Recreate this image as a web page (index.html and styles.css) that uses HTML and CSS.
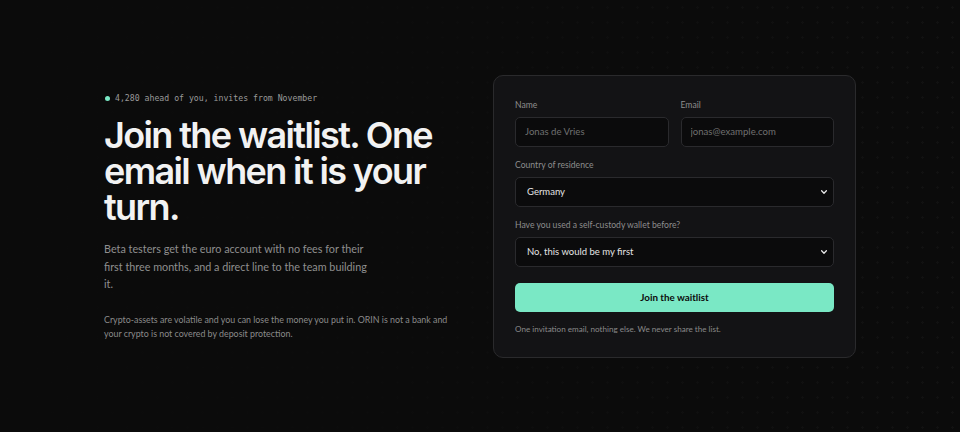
FILE: index.html
```html
<!DOCTYPE html>
<html lang="en">
<head>
<meta charset="utf-8">
<title>Join the waitlist</title>
<link rel="stylesheet" href="styles.css">
</head>
<body>
<main class="page">
  <div class="wrap">
    <section class="intro">
      <p class="eyebrow"><span class="dot"></span>4,280 ahead of you, invites from November</p>
      <h1 class="title">Join the waitlist. One email when it is your turn.</h1>
      <p class="lead">Beta testers get the euro account with no fees for their first three months, and a direct line to the team building it.</p>
      <p class="note">Crypto-assets are volatile and you can lose the money you put in. ORIN is not a bank and your crypto is not covered by deposit protection.</p>
    </section>
    <form class="card">
      <div class="row">
        <label class="field">
          <span class="label">Name</span>
          <input class="input" type="text" placeholder="Jonas de Vries">
        </label>
        <label class="field">
          <span class="label">Email</span>
          <input class="input" type="email" placeholder="jonas@example.com">
        </label>
      </div>
      <label class="field">
        <span class="label">Country of residence</span>
        <span class="select-wrap">
          <select class="input select">
            <option>Germany</option>
          </select>
          <svg class="chev" viewBox="0 0 10 10" width="8" height="8"><path d="M2 3.5 L5 6.5 L8 3.5" fill="none" stroke="#e8e8e8" stroke-width="1.6" stroke-linecap="round" stroke-linejoin="round"/></svg>
        </span>
      </label>
      <label class="field">
        <span class="label">Have you used a self-custody wallet before?</span>
        <span class="select-wrap">
          <select class="input select">
            <option>No, this would be my first</option>
          </select>
          <svg class="chev" viewBox="0 0 10 10" width="8" height="8"><path d="M2 3.5 L5 6.5 L8 3.5" fill="none" stroke="#e8e8e8" stroke-width="1.6" stroke-linecap="round" stroke-linejoin="round"/></svg>
        </span>
      </label>
      <button class="btn" type="button">Join the waitlist</button>
      <p class="foot">One invitation email, nothing else. We never share the list.</p>
    </form>
  </div>
</main>
</body>
</html>
```

FILE: styles.css
```css
* { box-sizing: border-box; }
html, body { margin: 0; padding: 0; }
body {
  background-color: #0b0b0b;
  background-image: radial-gradient(circle, rgba(255,255,255,0.05) 1px, transparent 1.2px);
  background-size: 15px 15px;
  font-family: Lato, "Noto Sans", "Liberation Sans", sans-serif;
  color: #e8e8e8;
  width: 960px;
  height: 432px;
  overflow: hidden;
}
.page {
  height: 432px;
  display: flex;
  align-items: center;
  background: linear-gradient(90deg, #0b0b0b 0%, rgba(11,11,11,0.9) 40%, rgba(11,11,11,0.4) 100%);
}
.wrap {
  width: 752px;
  margin: 0 auto;
  display: grid;
  grid-template-columns: 1fr 363px;
  column-gap: 26px;
  align-items: center;
}
.intro { padding-top: 2px; }
.eyebrow {
  margin: 0 0 13px;
  font-family: "DejaVu Sans Mono", "Liberation Mono", monospace;
  font-size: 8.2px;
  line-height: 11px;
  color: #9a9a9a;
  display: flex;
  align-items: center;
  gap: 5px;
}
.dot {
  width: 5px; height: 5px; border-radius: 50%;
  background: #7ae8c5;
  margin-left: 1px;
}
.title {
  margin: 0 0 15px;
  font-family: Inter, "Noto Sans", sans-serif;
  font-weight: 600;
  font-size: 36px;
  line-height: 36px;
  letter-spacing: -0.045em;
  color: #f2f2f2;
}
.lead {
  margin: 0 0 20px;
  max-width: 270px;
  font-size: 10.8px;
  line-height: 17.5px;
  color: #8f8f8f;
}
.note {
  margin: 0;
  max-width: 350px;
  font-size: 8.85px;
  line-height: 14px;
  color: #8a8a8a;
}
.card {
  background: #131315;
  border: 1px solid #2a2a2c;
  border-radius: 10px;
  padding: 24px 21px 22px;
  display: flex;
  flex-direction: column;
  gap: 13px;
}
.row {
  display: grid;
  grid-template-columns: 1fr 1fr;
  gap: 12px;
}
.field {
  display: flex;
  flex-direction: column;
  gap: 6px;
}
.label {
  font-size: 8.6px;
  line-height: 11px;
  color: #8d8d8d;
}
.input {
  width: 100%;
  height: 30px;
  background: #0b0b0c;
  border: 1px solid #2a2a2d;
  border-radius: 5px;
  padding: 0 9px;
  font-family: Lato, "Noto Sans", sans-serif;
  font-size: 9.6px;
  color: #e6e6e6;
  outline: none;
}
.input::placeholder { color: #707070; }
.select-wrap { position: relative; display: block; }
.select {
  appearance: none;
  -webkit-appearance: none;
  padding-left: 11px;
  font-size: 9.5px;
  color: #e4e4e4;
}
.chev {
  position: absolute;
  right: 6px;
  top: 11px;
  pointer-events: none;
}
.btn {
  margin-top: 3px;
  height: 29px;
  border: 0;
  border-radius: 5px;
  background: #7ae8c5;
  color: #0c0c0c;
  font-family: Lato, "Noto Sans", sans-serif;
  font-size: 9.8px;
  font-weight: 700;
  cursor: pointer;
}
.foot {
  margin: -2px 0 0;
  font-size: 8.1px;
  line-height: 12px;
  color: #8a8a8a;
}
```
